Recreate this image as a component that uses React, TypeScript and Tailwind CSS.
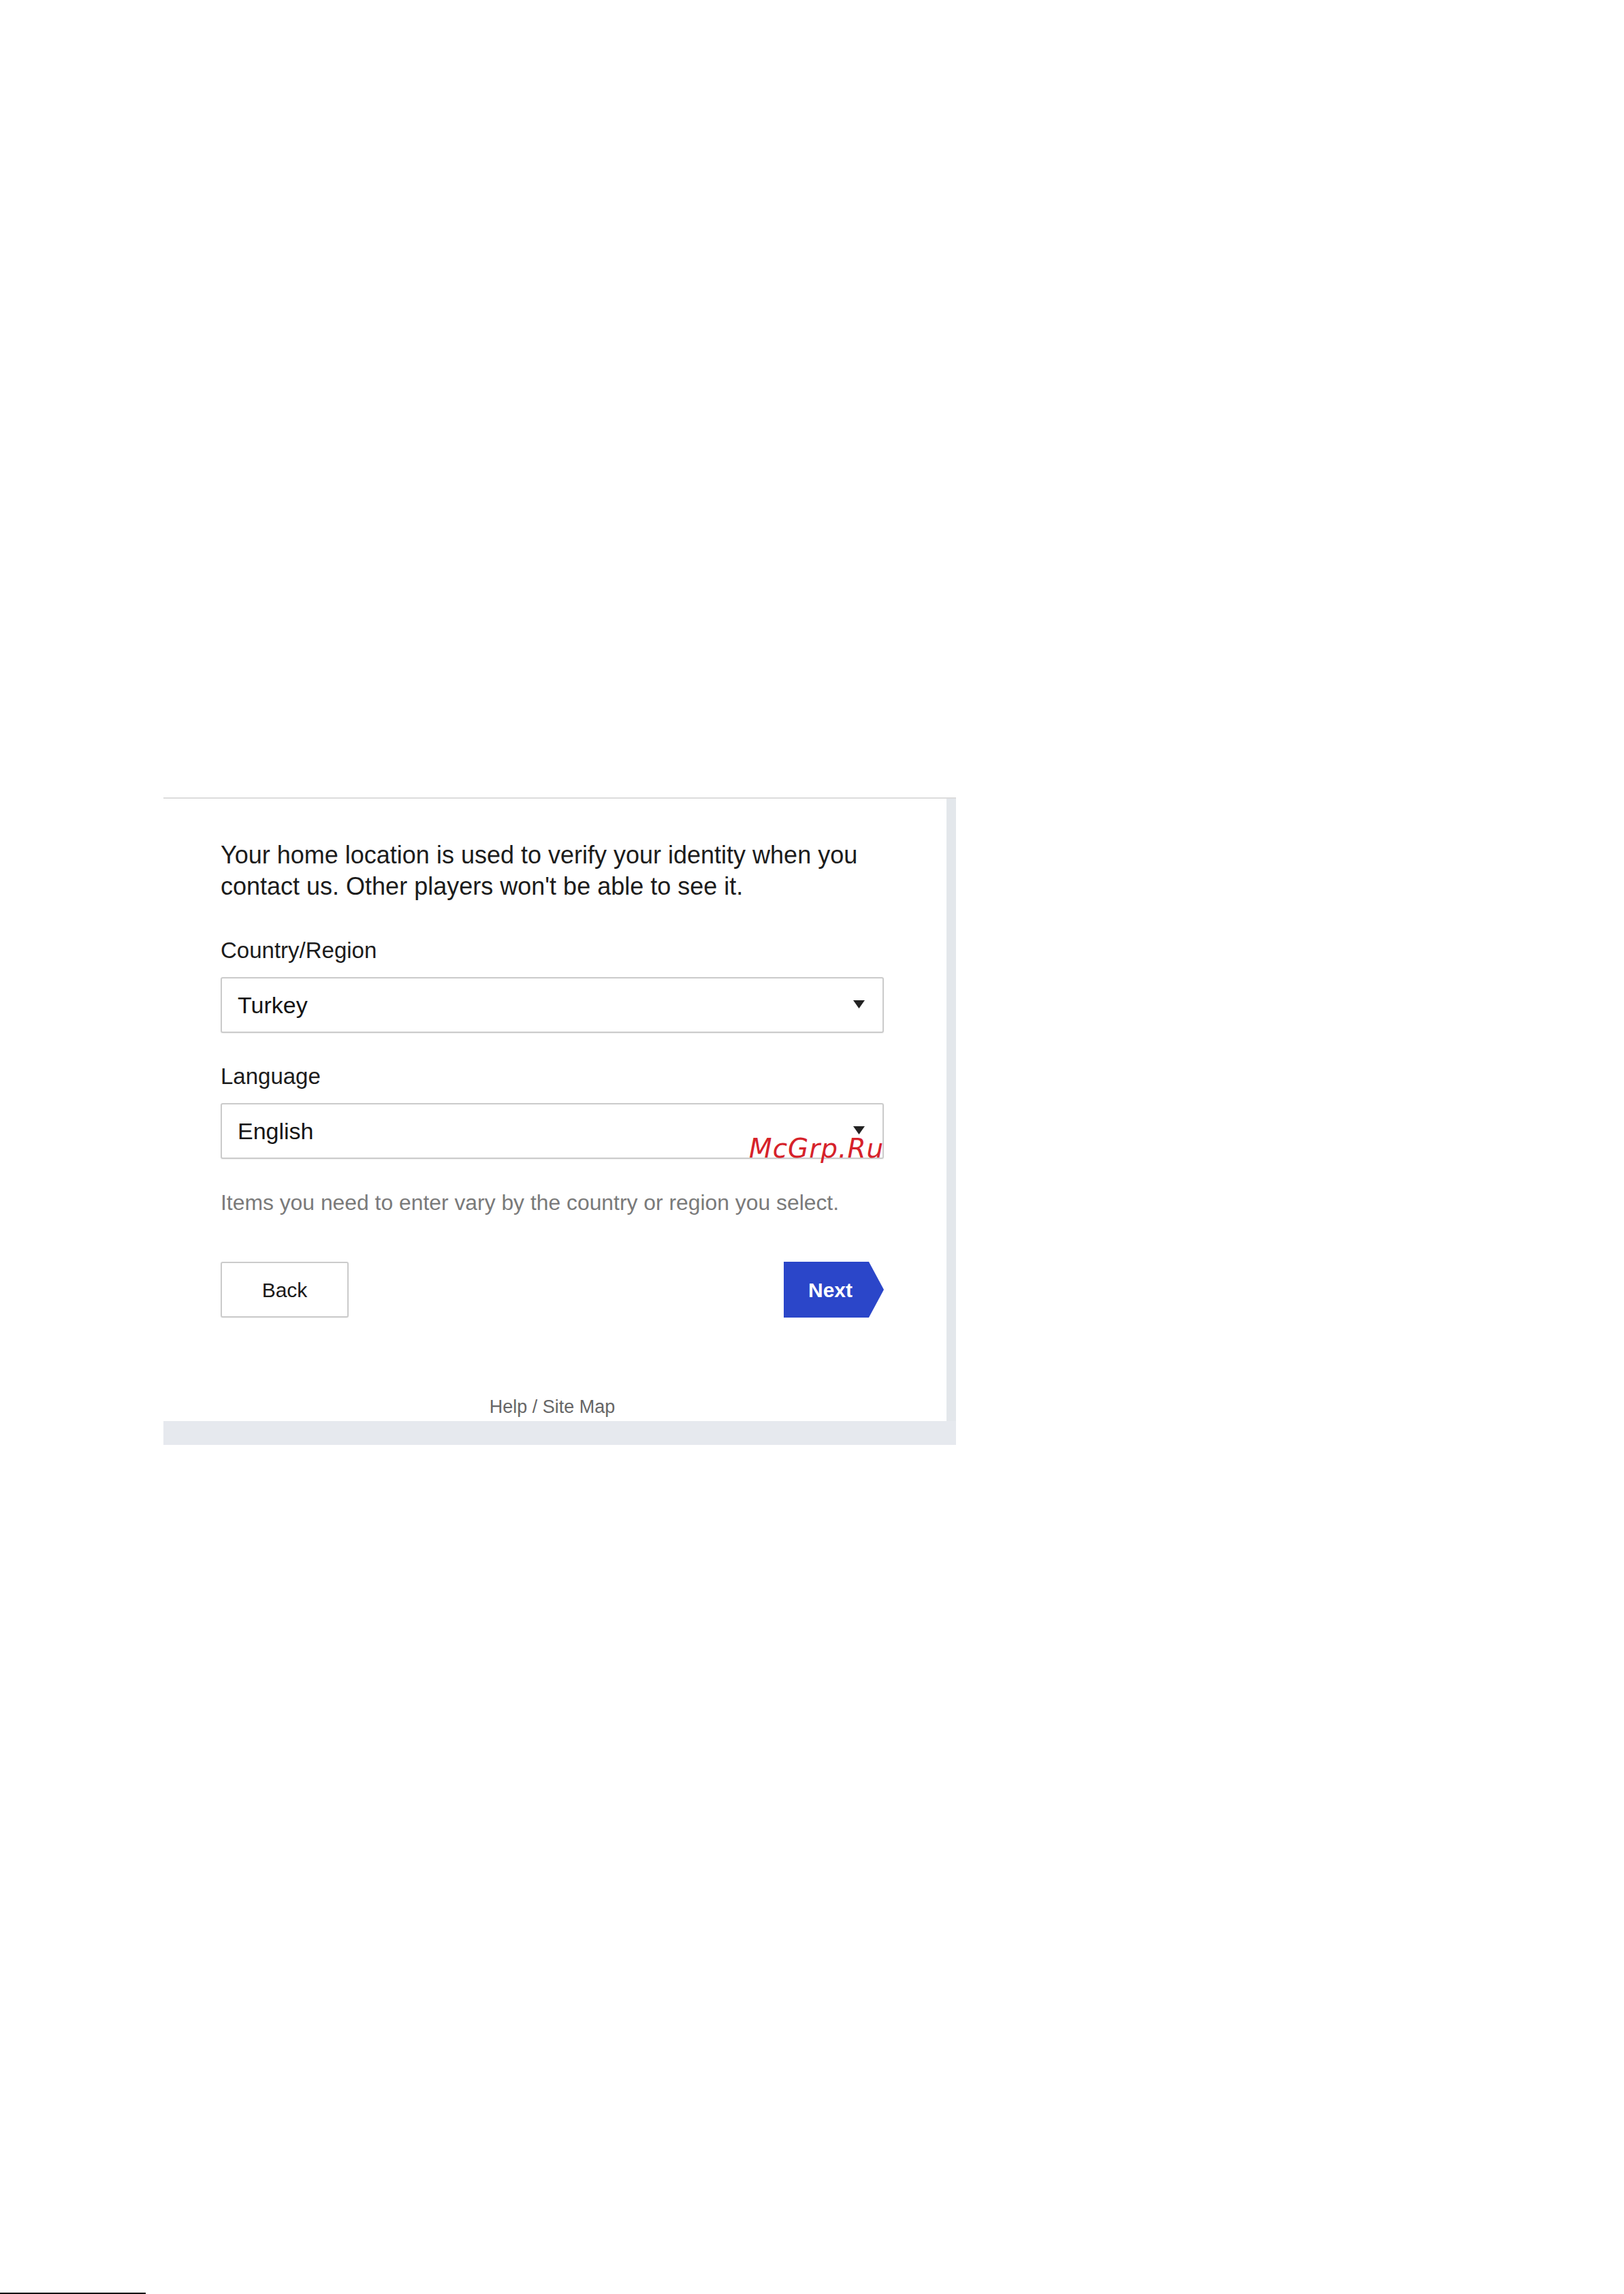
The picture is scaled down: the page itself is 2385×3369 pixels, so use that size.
import * as React from "react";

function SelectBox({
  value,
  children,
}: {
  value: string;
  children?: React.ReactNode;
}) {
  return (
    <div className="relative mt-[19px] flex h-[82px] w-full items-center justify-between rounded-[3px] border-2 border-[#cbcbcb] bg-white pl-[23px] pr-[26px] shadow-[0_1px_2px_rgba(0,0,0,0.06)]">
      <span className="text-[34px] leading-[40px] text-[#151515]">{value}</span>
      <svg width="17" height="12" viewBox="0 0 17 12" className="mb-[2px]">
        <path d="M0 0 H17 L8.5 12 Z" fill="#222" />
      </svg>
      {children}
    </div>
  );
}

export default function App() {
  return (
    <div className="flex h-[3369px] w-[2385px] flex-col bg-white font-['Liberation_Sans',Arial,sans-serif]">
      {/* Screenshot panel */}
      <div className="ml-[240px] mt-[1171px] w-[1164px] border-t-2 border-[#dcdcdc]">
        <div className="flex">
          <div className="w-[1150px] pb-[5px] pl-[84px] pr-[92px] pt-[60px]">
            <p className="text-[36px] leading-[46px] text-[#1c1c1c]">
              Your home location is used to verify your identity when you
              <br />
              contact us. Other players won't be able to see it.
            </p>

            <div className="mt-[51px] text-[33px] leading-[40px] text-[#1c1c1c]">
              Country/Region
            </div>
            <SelectBox value="Turkey" />

            <div className="mt-[44px] text-[33px] leading-[40px] text-[#1c1c1c]">
              Language
            </div>
            <SelectBox value="English">
              {/* site watermark over the field */}
              <span className="absolute left-[774px] top-[45px] font-['DejaVu_Sans',sans-serif] text-[39px] italic leading-[39px] tracking-[1px] text-[#d6222a]">
                McGrp.Ru
              </span>
            </SelectBox>

            <p className="mt-[44px] text-[31.85px] leading-[40px] text-[#7a7a7a]">
              Items you need to enter vary by the country or region you select.
            </p>

            <div className="mt-[67px] flex items-center justify-between">
              <button className="flex h-[82px] w-[188px] items-center justify-center rounded-[3px] border-2 border-[#cbcbcb] bg-white text-[30px] text-[#1a1a1a] shadow-[0_1px_2px_rgba(0,0,0,0.06)]">
                Back
              </button>
              <button className="flex h-[82px] w-[147px] items-center justify-center bg-[#2b46c9] pr-[10px] text-[30px] font-bold text-white [clip-path:polygon(0_0,85%_0,100%_50%,85%_100%,0_100%)]">
                Next
              </button>
            </div>

            <div className="mt-[115px] text-center text-[27px] leading-[32px] text-[#666]">
              Help / Site Map
            </div>
          </div>
          <div className="w-[14px] bg-[#e3e7eb]" />
        </div>
        <div className="h-[35px] bg-[#e6e9ee]" />
      </div>

      {/* bottom edge artefact */}
      <div className="mt-auto h-[2px] w-[214px] bg-black" />
    </div>
  );
}
